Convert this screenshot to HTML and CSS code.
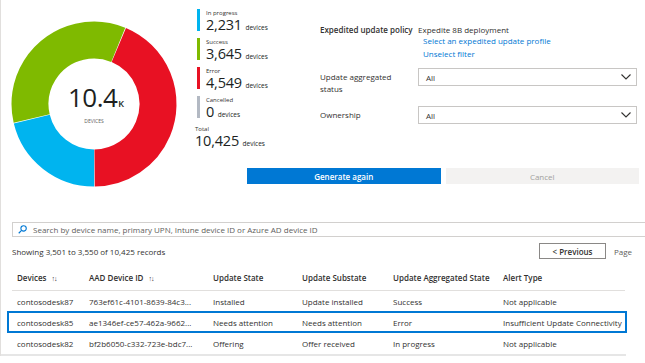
FILE: index.html
```html
<!DOCTYPE html>
<html lang="en">
<head>
  <meta charset="UTF-8">
  <title>Expedited update report</title>
  <meta name="viewport" content="width=device-width, initial-scale=1">
  <link rel="stylesheet" href="styles.css">
</head>
<body>
  <div class="page">
    <div class="summary">
      <div class="donut">
        <svg width="166" height="166" viewBox="0 0 166 166">
          <circle cx="83" cy="83" r="64" fill="none" stroke="#e81123" stroke-width="37"
            stroke-dasharray="174.7 402.12" transform="rotate(-67.2 83 83)" />
          <circle cx="83" cy="83" r="64" fill="none" stroke="#00b4ef" stroke-width="37"
            stroke-dasharray="85.2 402.12" transform="rotate(89.9 83 83)" />
          <circle cx="83" cy="83" r="64" fill="none" stroke="#7fba00" stroke-width="37"
            stroke-dasharray="139.8 402.12" transform="rotate(166.9 83 83)" />
        </svg>
        <div class="donut-center">
          <div class="big">10.4<span class="unit">K</span></div>
          <div class="caption">DEVICES</div>
        </div>
      </div>

      <div class="side">
        <div class="top">
          <div class="legend">
            <div class="legend-item">
              <span class="bar blue"></span>
              <div>
                <div class="legend-label">In progress</div>
                <div class="legend-value">2,231 <small>devices</small></div>
              </div>
            </div>
            <div class="legend-item">
              <span class="bar green"></span>
              <div>
                <div class="legend-label">Success</div>
                <div class="legend-value">3,645 <small>devices</small></div>
              </div>
            </div>
            <div class="legend-item">
              <span class="bar red"></span>
              <div>
                <div class="legend-label">Error</div>
                <div class="legend-value">4,549 <small>devices</small></div>
              </div>
            </div>
            <div class="legend-item">
              <span class="bar grey"></span>
              <div>
                <div class="legend-label">Cancelled</div>
                <div class="legend-value">0 <small>devices</small></div>
              </div>
            </div>
            <div class="legend-total">
              <div class="legend-label">Total</div>
              <div class="legend-value">10,425 <small>devices</small></div>
            </div>
          </div>

          <div class="filters">
            <div class="filter-row policy">
              <div class="filter-label strong">Expedited update policy</div>
              <div>
                <div class="policy-name">Expedite 8B deployment</div>
                <a class="link">Select an expedited update profile</a>
                <a class="link">Unselect filter</a>
              </div>
            </div>
            <div class="filter-row status">
              <div class="filter-label narrow">Update aggregated status</div>
              <div class="dropdown">
                <span>All</span>
                <svg width="10" height="6" viewBox="0 0 10 6"><polyline points="0.5,0.5 5,5 9.5,0.5" fill="none" stroke="#323130" stroke-width="1.1" /></svg>
              </div>
            </div>
            <div class="filter-row">
              <div class="filter-label">Ownership</div>
              <div class="dropdown">
                <span>All</span>
                <svg width="10" height="6" viewBox="0 0 10 6"><polyline points="0.5,0.5 5,5 9.5,0.5" fill="none" stroke="#323130" stroke-width="1.1" /></svg>
              </div>
            </div>
          </div>
        </div>

        <div class="actions">
          <button type="button" class="btn primary">Generate again</button>
          <button type="button" class="btn disabled">Cancel</button>
        </div>
      </div>
    </div>

    <div class="search">
      <svg width="9" height="9" viewBox="0 0 10 10"><circle cx="6.2" cy="3.8" r="3" fill="none" stroke="#0078d4" stroke-width="1.2" /><line x1="4" y1="6" x2="0.8" y2="9.2" stroke="#0078d4" stroke-width="1.3" /></svg>
      <span>Search by device name, primary UPN, Intune device ID or Azure AD device ID</span>
    </div>

    <div class="pager-row">
      <div class="count">Showing 3,501 to 3,550 of 10,425 records</div>
      <div class="pager">
        <button type="button" class="btn-prev">&lt; Previous</button>
        <span>Page</span>
      </div>
    </div>

    <div class="table-wrap">
      <div class="grid">
        <div class="row head">
          <div>Devices <span class="sort">↑↓</span></div>
          <div>AAD Device ID <span class="sort">↑↓</span></div>
          <div>Update State</div>
          <div>Update Substate</div>
          <div>Update Aggregated State</div>
          <div>Alert Type</div>
        </div>
        <div class="row">
          <div>contosodesk87</div>
          <div>763ef61c-4101-8639-84c3...</div>
          <div>Installed</div>
          <div>Update installed</div>
          <div>Success</div>
          <div>Not applicable</div>
        </div>
        <div class="row selected">
          <div>contosodesk85</div>
          <div>ae1346ef-ce57-462a-9662...</div>
          <div>Needs attention</div>
          <div>Needs attention</div>
          <div>Error</div>
          <div>Insufficient Update Connectivity</div>
        </div>
        <div class="row last">
          <div>contosodesk82</div>
          <div>bf2b6050-c332-723e-bdc7...</div>
          <div>Offering</div>
          <div>Offer received</div>
          <div>In progress</div>
          <div>Not applicable</div>
        </div>
      </div>
    </div>
  </div>
</body>
</html>
```

FILE: styles.css
```css
body {
  margin: 0;
  font-family: "Open Sans", sans-serif;
  font-size: 8px;
  color: #323130;
  background: #fff;
  overflow: hidden;
}

.page {
  border-left: 1px solid #e1dfdd;
}

.summary {
  display: flex;
  height: 222px;
}

/* donut chart */
.donut {
  display: grid;
  flex: none;
  margin: 21px 0 0 10px;
  width: 166px;
  height: 166px;
}

.donut svg,
.donut-center {
  grid-area: 1 / 1;
}

.donut-center {
  place-self: center;
  text-align: center;
  margin-left: 4px;
}

.big {
  font-size: 26px;
  line-height: 26px;
  letter-spacing: -0.5px;
  color: #201f1e;
}

.big .unit {
  font-size: 9px;
  font-weight: 600;
  letter-spacing: 0;
  margin-left: 1px;
}

.caption {
  font-size: 5px;
  color: #605e5c;
  margin-top: 1px;
  margin-right: 4px;
}

/* legend + filters */
.side {
  margin-left: 18px;
  flex: 1;
}

.top {
  display: flex;
  height: 168px;
}

.legend {
  flex: none;
  width: 125px;
  padding-top: 9px;
}

.legend-item {
  display: flex;
  gap: 6px;
  height: 23px;
  margin-bottom: 6px;
}

.bar {
  width: 3px;
  margin-left: 2px;
  height: 22px;
}

.bar.blue { background: #00b4ef; }
.bar.green { background: #7fba00; }
.bar.red { background: #e81123; }
.bar.grey { background: #b3b9c3; }

.legend-label {
  font-size: 6px;
  line-height: 8px;
  height: 8px;
}

.legend-value {
  font-size: 14.5px;
  line-height: 15px;
  height: 15px;
  letter-spacing: -0.2px;
  color: #201f1e;
  white-space: nowrap;
}

.legend-value small {
  font-size: 6.5px;
  line-height: 6px;
  letter-spacing: 0;
}

.filters {
  flex: 1;
  padding-top: 24px;
  padding-right: 8px;
}

.filter-row {
  display: grid;
  grid-template-columns: 98px 1fr;
  align-items: center;
}

.filter-row.policy {
  align-items: start;
  margin-bottom: 8px;
}

.filter-row.status {
  align-items: start;
  margin-bottom: 11px;
}

.filter-label {
  line-height: 12px;
  white-space: nowrap;
}

.filter-label.narrow {
  white-space: normal;
  width: 80px;
  margin-top: 3px;
}

.strong {
  font-weight: 600;
}

.policy-name {
  line-height: 11px;
}

.link {
  display: block;
  color: #0078d4;
  line-height: 12.5px;
  margin-left: 5px;
}

.dropdown {
  display: flex;
  justify-content: space-between;
  align-items: center;
  height: 18px;
  box-sizing: border-box;
  border: 1px solid #c8c6c4;
  padding: 0 5px 0 7px;
}

.actions {
  display: flex;
  gap: 5px;
  margin-left: 52px;
  padding-right: 6px;
}

.btn {
  flex: 1;
  height: 16px;
  border: none;
  font-family: inherit;
  font-size: 8px;
  padding: 0;
}

.btn.primary {
  background: #0078d4;
  color: #fff;
  font-weight: 600;
}

.btn.disabled {
  background: #f3f2f1;
  color: #a19f9d;
}

/* search + paging */
.search {
  display: flex;
  align-items: center;
  gap: 6px;
  margin-left: 11px;
  height: 15px;
  box-sizing: border-box;
  border: 1px solid #d2d0ce;
  border-right: none;
  padding-left: 5px;
  color: #605e5c;
}

.pager-row {
  display: flex;
  justify-content: space-between;
  align-items: center;
  margin: 6px 0 0 11px;
  width: 621px;
  height: 16px;
}

.pager {
  display: flex;
  align-items: center;
  gap: 8px;
}

.btn-prev {
  width: 67px;
  height: 16px;
  background: #fff;
  border: 1px solid #8a8886;
  font-family: inherit;
  font-size: 8px;
  font-weight: 600;
  color: #323130;
  padding: 0;
}

.pager span {
  color: #605e5c;
  width: 19px;
}

/* device table */
.table-wrap {
  width: 625px;
  margin-top: 6px;
  padding-left: 11px;
  box-sizing: border-box;
  border-bottom: 2px solid #e6e6e6;
}

.grid {
  width: 613px;
}

.row {
  display: grid;
  grid-template-columns: 72px 124px 89px 91px 110px 1fr;
  align-items: center;
  height: 21px;
  padding-left: 5px;
  border-bottom: 1px solid #edebe9;
  box-sizing: border-box;
  white-space: nowrap;
}

.row.head {
  height: 26px;
  font-weight: 600;
  border-bottom-color: #e1dfdd;
}

.row.selected {
  margin: -1px -2px 0 -5px;
  height: 22px;
  padding-left: 8px;
  border: 2px solid #0078d4;
}

.row.last {
  border-bottom: none;
}

.sort {
  font-weight: 400;
  font-size: 7px;
  letter-spacing: -1px;
  margin-left: 3px;
}
```
